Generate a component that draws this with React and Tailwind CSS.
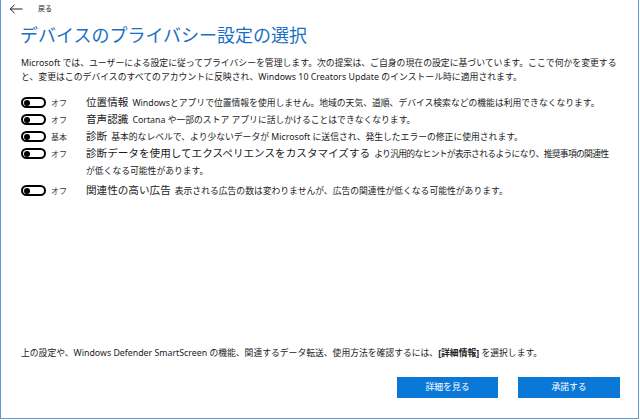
import React from "react";

const FONT = { fontFamily: '"Noto Sans", "Noto Sans CJK JP", sans-serif' };

const ROWS = [
  {
    state: "オフ",
    label: "位置情報",
    lines: ["Windowsとアプリで位置情報を使用しません。地域の天気、道順、デバイス検索などの機能は利用できなくなります。"],
  },
  { state: "オフ", label: "音声認識", lines: ["Cortana や一部のストア アプリに話しかけることはできなくなります。"] },
  { state: "基本", label: "診断", lines: ["基本的なレベルで、より少ないデータが Microsoft に送信され、発生したエラーの修正に使用されます。"] },
  {
    state: "オフ",
    label: "診断データを使用してエクスペリエンスをカスタマイズする",
    lines: ["より汎用的なヒントが表示されるようになり、推奨事項の関連性", "が低くなる可能性があります。"],
    tight: true,
  },
  { state: "オフ", label: "関連性の高い広告", lines: ["表示される広告の数は変わりませんが、広告の関連性が低くなる可能性があります。"] },
];

function Toggle() {
  return (
    <div className="flex h-[11px] w-[25px] items-center rounded-full border-2 border-black px-[1px]">
      <div className="h-[6px] w-[6px] rounded-full bg-black" />
    </div>
  );
}

function SettingRow({ state, label, lines, tight }) {
  return (
    <div className="flex">
      <div className="flex h-[17px] w-[65px] shrink-0 items-center gap-[5px]">
        <Toggle />
        <span className="text-[8px] text-[#333]">{state}</span>
      </div>
      <div className="leading-[17px] whitespace-nowrap">
        <div className="flex h-[17px] items-baseline gap-[4px]">
          <span className="text-[10.6px] text-[#1a1a1a]">{label}</span>
          <span className={tight ? "text-[8.8px] tracking-[-0.7px] text-[#222]" : "text-[8.8px] text-[#222]"}>
            {lines[0]}
          </span>
        </div>
        {lines[1] && <div className="pb-[2px] text-[8.8px] leading-[18px] text-[#222]">{lines[1]}</div>}
      </div>
    </div>
  );
}

export default function App() {
  return (
    <div className="h-[420px] w-[640px] bg-white" style={FONT}>
      <div className="flex h-[419px] w-[639px] flex-col border-x border-b border-[#5e9bd6] pb-[20px]">
        <div className="flex h-[14px] items-center pl-[8px] pt-[4px]">
          <svg width="14" height="10" viewBox="0 0 14 10" fill="none" stroke="#222" strokeWidth="1">
            <path d="M13.5 5H1M5.5 0.8L1.2 5l4.3 4.2" />
          </svg>
          <span className="ml-[15px] text-[7px] text-[#222]">戻る</span>
        </div>

        <h1 className="mt-[9px] pl-[19px] text-[18px] leading-[24px] text-[#1a6fc4]">
          デバイスのプライバシー設定の選択
        </h1>

        <p className="mt-[9px] pl-[20px] text-[8.85px] leading-[14px] whitespace-nowrap text-[#222]">
          Microsoft では、ユーザーによる設定に従ってプライバシーを管理します。次の提案は、ご自身の現在の設定に基づいています。ここで何かを変更する
          <br />
          と、変更はこのデバイスのすべてのアカウントに反映され、Windows 10 Creators Update のインストール時に適用されます。
        </p>

        <div className="mt-[10px] flex flex-col pl-[20px]">
          {ROWS.map((r) => (
            <SettingRow key={r.label} {...r} />
          ))}
        </div>

        <div className="flex-1" />

        <p className="pl-[20px] text-[8.8px] leading-[14px] text-[#222]">
          上の設定や、Windows Defender SmartScreen の機能、関連するデータ転送、使用方法を確認するには、
          <span className="font-bold">[詳細情報]</span> を選択します。
        </p>

        <div className="mt-[17px] flex justify-end gap-[20px] pr-[18px]">
          <button className="h-[21px] w-[101px] bg-[#0a78d7] text-[8.8px] text-white">詳細を見る</button>
          <button className="h-[21px] w-[102px] bg-[#0a78d7] text-[8.8px] text-white">承諾する</button>
        </div>
      </div>
    </div>
  );
}
